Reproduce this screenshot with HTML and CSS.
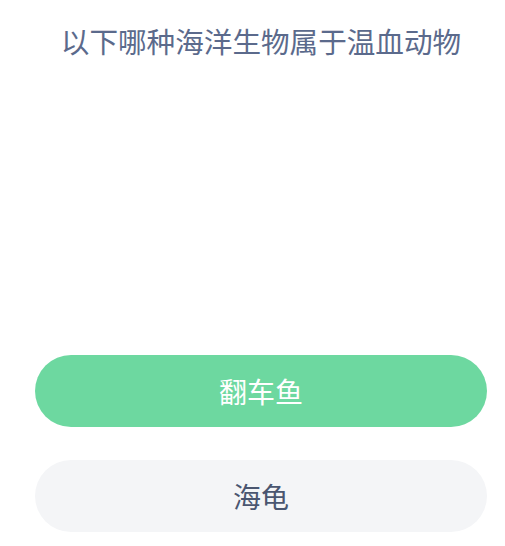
FILE: index.html
```html
<!DOCTYPE html>
<html lang="zh-CN">
<head>
    <meta charset="UTF-8">
    <meta name="viewport" content="width=device-width, initial-scale=1.0">
    <title>答题</title>
    <link rel="stylesheet" href="styles.css">
</head>
<body>

    <div class="quiz">
        <h2 class="question">以下哪种海洋生物属于温血动物</h2>

        <div class="options">
            <button class="option correct">翻车鱼</button>
            <button class="option">海龟</button>
        </div>
    </div>

</body>
</html>
```

FILE: styles.css
```css
body {
    margin: 0;
    background-color: white;
    font-family: "Noto Sans CJK SC", "Noto Sans", sans-serif;
}
.quiz {
    width: 452px;
    padding: 0 18px 0 35px;
}
.question {
    margin: 0;
    padding-top: 21px;
    height: 355px;
    box-sizing: border-box;
    text-align: center;
    font-size: 28.6px;
    font-weight: normal;
    line-height: 40px;
    color: #5b6a8c;
}
.options {
    display: flex;
    flex-direction: column;
    gap: 33px;
}
.option {
    height: 72px;
    border: none;
    border-radius: 36px;
    background-color: #f4f5f7;
    color: #4a5670;
    font-family: inherit;
    font-size: 28px;
}
.option.correct {
    background-color: #6dd8a0;
    color: white;
}
```
